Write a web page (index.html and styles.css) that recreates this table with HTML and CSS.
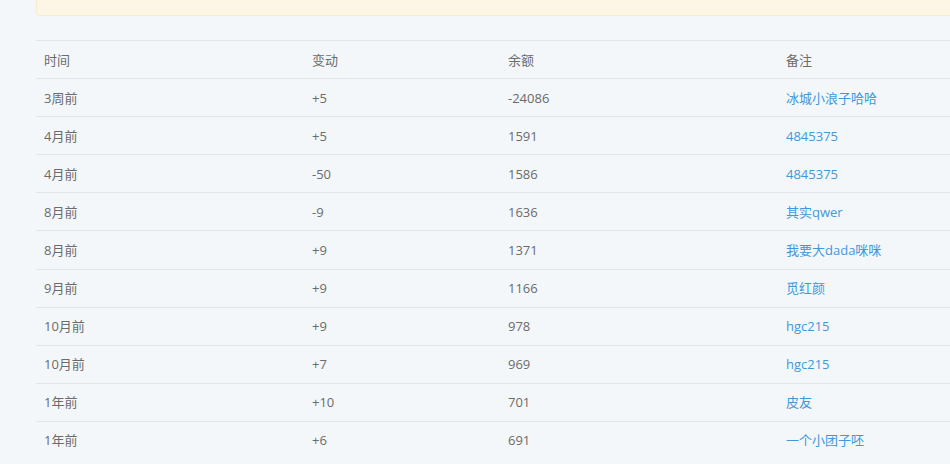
FILE: index.html
```html
<!DOCTYPE html>
<html lang="zh">
<head>
<meta charset="utf-8">
<link rel="stylesheet" href="styles.css">
</head>
<body>
<div class="page">
  <div class="notice"></div>
  <table class="log">
    <colgroup>
      <col class="c1"><col class="c2"><col class="c3"><col class="c4">
    </colgroup>
    <thead>
      <tr><th>时间</th><th>变动</th><th>余额</th><th>备注</th></tr>
    </thead>
    <tbody>
      <tr><td>3周前</td><td>+5</td><td>-24086</td><td><a href="#">冰城小浪子哈哈</a></td></tr>
      <tr><td>4月前</td><td>+5</td><td>1591</td><td><a href="#">4845375</a></td></tr>
      <tr><td>4月前</td><td>-50</td><td>1586</td><td><a href="#">4845375</a></td></tr>
      <tr><td>8月前</td><td>-9</td><td>1636</td><td><a href="#">其实qwer</a></td></tr>
      <tr><td>8月前</td><td>+9</td><td>1371</td><td><a href="#">我要大dada咪咪</a></td></tr>
      <tr><td>9月前</td><td>+9</td><td>1166</td><td><a href="#">觅红颜</a></td></tr>
      <tr><td>10月前</td><td>+9</td><td>978</td><td><a href="#">hgc215</a></td></tr>
      <tr><td>10月前</td><td>+7</td><td>969</td><td><a href="#">hgc215</a></td></tr>
      <tr><td>1年前</td><td>+10</td><td>701</td><td><a href="#">皮友</a></td></tr>
      <tr><td>1年前</td><td>+6</td><td>691</td><td><a href="#">一个小团子呸</a></td></tr>
    </tbody>
  </table>
</div>
</body>
</html>
```
FILE: styles.css
```css
html, body {
  margin: 0;
  padding: 0;
  background: #f4f7fa;
  overflow: hidden;
}
body {
  font-family: "Open Sans", "Noto Sans CJK SC", sans-serif;
  font-size: 13px;
  color: #6b6b6b;
}
.page {
  padding-left: 36px;
  width: 1200px;
}
.notice {
  height: 15px;
  background: #fdf6e4;
  border: 1px solid #f6ecd2;
  border-top: none;
  border-radius: 0 0 4px 4px;
}
.log {
  margin-top: 24px;
  border-collapse: collapse;
  width: 1150px;
  table-layout: fixed;
}
.c1 { width: 268px; }
.c2 { width: 196px; }
.c3 { width: 278px; }
.log th, .log td {
  height: 37.1px;
  padding: 0 8px;
  text-align: left;
  font-weight: normal;
  border-top: 1px solid #e3e5e8;
  vertical-align: middle;
  line-height: 18px;
}
.log a {
  color: #4297da;
  text-decoration: none;
}
```
